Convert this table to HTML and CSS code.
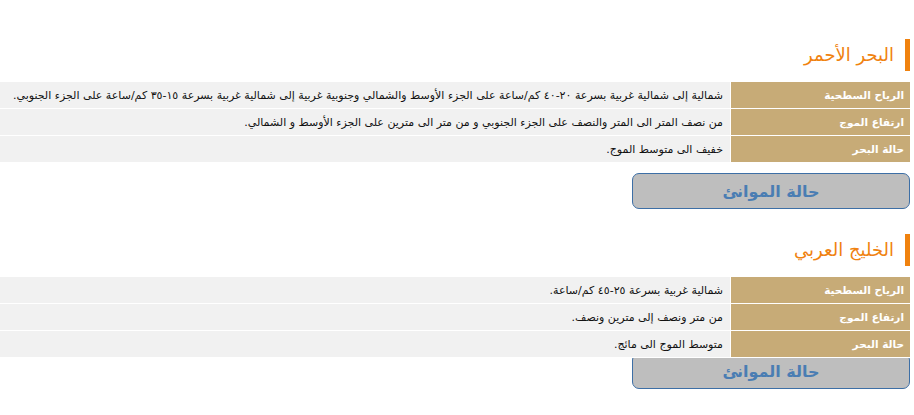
FILE: index.html
```html
<!DOCTYPE html>
<html lang="ar" dir="rtl">
<head>
<meta charset="utf-8">
<link rel="stylesheet" href="styles.css">
</head>
<body>
<div class="page">
  <section class="sea">
    <h2 class="sea-title">البحر الأحمر</h2>
    <table class="info">
      <tr><th>الرياح السطحية</th><td>شمالية إلى شمالية غربية بسرعة ٢٠-٤٠ كم/ساعة على الجزء الأوسط والشمالي وجنوبية غربية إلى شمالية غربية بسرعة ١٥-٣٥ كم/ساعة على الجزء الجنوبي.</td></tr>
      <tr><th>ارتفاع الموج</th><td>من نصف المتر الى المتر والنصف على الجزء الجنوبي و من متر الى مترين على الجزء الأوسط و الشمالي.</td></tr>
      <tr><th>حالة البحر</th><td>خفيف الى متوسط الموج.</td></tr>
    </table>
    <div class="btn-row"><a class="port-btn">حالة الموانئ</a></div>
  </section>
  <section class="sea sea-second">
    <h2 class="sea-title">الخليج العربي</h2>
    <table class="info">
      <tr><th>الرياح السطحية</th><td>شمالية غربية بسرعة ٢٥-٤٥ كم/ساعة.</td></tr>
      <tr><th>ارتفاع الموج</th><td>من متر ونصف إلى مترين ونصف.</td></tr>
      <tr><th>حالة البحر</th><td>متوسط الموج الى مائج.</td></tr>
    </table>
    <div class="btn-row btn-row-tight"><a class="port-btn">حالة الموانئ</a></div>
  </section>
</div>
</body>
</html>
```
FILE: styles.css
```css
html, body {
  margin: 0;
  padding: 0;
  background: #ffffff;
}
body {
  font-family: "DejaVu Sans", "Noto Sans", sans-serif;
  color: #222222;
}
.page {
  margin-right: 4px;
  padding-top: 39px;
}
.sea-second {
  margin-top: 25px;
}
.sea-title {
  margin: 0;
  height: 32px;
  line-height: 32px;
  border-right: 5px solid #f0820f;
  padding-right: 11px;
  font-size: 18px;
  font-weight: normal;
  color: #f0820f;
}
.info {
  position: relative;
  margin-top: 11px;
  width: 100%;
  border-collapse: collapse;
  font-size: 11px;
}
.info th,
.info td {
  height: 26px;
  padding: 0;
  border-bottom: 1px solid #ffffff;
  vertical-align: middle;
  text-align: right;
  white-space: nowrap;
}
.info th {
  width: 173px;
  background: #c7ab77;
  color: #ffffff;
  font-weight: bold;
  font-size: 10.5px;
  padding-right: 6px;
}
.info td {
  background: #f1f1f1;
  border-right: 1px solid #ffffff;
  padding-right: 7px;
  color: #111111;
}
.btn-row {
  display: flex;
  margin-top: 10px;
}
.btn-row-tight {
  margin-top: -5px;
}
.port-btn {
  display: flex;
  align-items: center;
  justify-content: center;
  width: 276px;
  height: 34px;
  background: #bebebe;
  border: 1.5px solid #3d6fa6;
  border-radius: 7px;
  color: #4a7db3;
  font-size: 16px;
  font-weight: bold;
}
```
